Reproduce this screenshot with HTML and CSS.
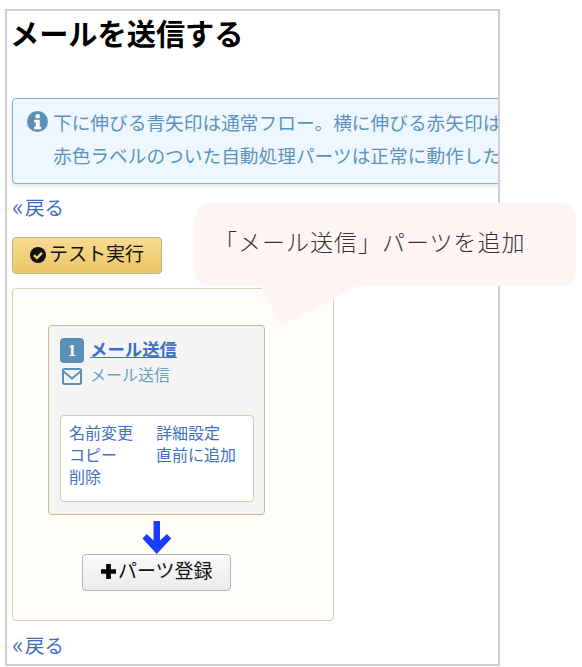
FILE: index.html
```html
<!DOCTYPE html>
<html lang="ja">
<head>
<meta charset="utf-8">
<title>メールを送信する</title>
<link rel="stylesheet" href="styles.css">
</head>
<body>
<div class="page">
  <main class="frame">
    <h1 class="title">メールを送信する</h1>
    <div class="info">
      <svg class="info-icon" viewBox="0 0 22 22" aria-hidden="true"><circle cx="11" cy="11" r="11" fill="#5a8fb8"/><rect x="9" y="3.500" width="4.400" height="4" rx="1" fill="#fff"/><path d="M7.500 9.200h5.800v7.200h1.600v2.600H7.500v-2.600h1.600v-4.600H7.500z" fill="#fff"/></svg>
      <div class="info-text">
        <p>下に伸びる青矢印は通常フロー。横に伸びる赤矢印は条件に一致した場合のフローです。</p>
        <p>赤色ラベルのついた自動処理パーツは正常に動作した場合のみ次へ進みます。</p>
      </div>
    </div>
    <a class="back" href="#"><span class="guil">«</span>戻る</a>
    <button class="btn btn-run" type="button">
      <svg class="run-icon" viewBox="0 0 20 20" aria-hidden="true"><circle cx="10" cy="10" r="10" fill="#111"/><path d="M5 10.200l3.600 3.600L15 7.400" fill="none" stroke="#f0cd78" stroke-width="3"/></svg><span class="btn-label">テスト実行</span>
    </button>
    <section class="canvas">
      <div class="part">
        <div class="part-head">
          <span class="num">1</span>
          <a class="part-name" href="#">メール送信</a>
        </div>
        <div class="part-type">
          <svg class="mail" viewBox="0 0 20 17" aria-hidden="true"><rect x="1" y="1" width="18" height="15" rx="1.500" fill="none" stroke="#5a8fb8" stroke-width="2"/><path d="M1.500 3.500L10 10.500l8.500-7" fill="none" stroke="#5a8fb8" stroke-width="2"/></svg>
          <span>メール送信</span>
        </div>
        <div class="ops">
          <a href="#">名前変更</a><a href="#">詳細設定</a>
          <a href="#">コピー</a><a href="#">直前に追加</a>
          <a href="#">削除</a>
        </div>
      </div>
      <svg class="arrow" viewBox="0 0 30 33" aria-hidden="true"><path d="M11.500 0H18v19.500l7-6.500 4.200 4.500L14.700 33 .5 17.500 4.700 13l6.800 6.500z" fill="#1a3cff"/></svg>
      <button class="btn btn-add" type="button">
        <svg class="plus" viewBox="0 0 16 16" aria-hidden="true"><path d="M5.500 0h5v5.500H16v5h-5.500V16h-5v-5.500H0v-5h5.500z" fill="#000"/></svg><span class="btn-label">パーツ登録</span>
      </button>
    </section>
    <a class="back back-bottom" href="#"><span class="guil">«</span>戻る</a>
  </main>
  <aside class="callout">
    <span>「メール送信」パーツを追加</span>
    <svg class="tail" viewBox="0 0 100 44" aria-hidden="true"><path d="M0 0h100L21 41z" fill="#fff5f4"/></svg>
  </aside>
</div>
</body>
</html>
```
FILE: styles.css
```css
* { box-sizing: border-box; }
html, body { margin: 0; padding: 0; background: #fff; }
body { font-family: "Noto Sans CJK JP", "Noto Sans", sans-serif; overflow: hidden; }
.page { position: relative; width: 582px; height: 667px; padding: 9px 0 0 5px; }
.frame {
  width: 495px; height: 657px; border: 2px solid #cfcfcf;
  overflow: hidden; padding: 0 0 0 5px;
}
.title { margin: 0 0 0 -2px; height: 87px; font-size: 29.200px; line-height: 42px; font-weight: 700; color: #000; white-space: nowrap; }
.info {
  display: flex; width: 560px; height: 86px; border: 1px solid #7fb0d2; border-radius: 4px;
  background: #eef7ff; box-shadow: 0 2px 4px rgba(0,0,0,.12);
  padding: 6px 0 0 14px; color: #5b93bd; font-size: 18.700px; line-height: 33px;
}
.info-icon { width: 21px; height: 21px; flex: none; margin: 6px 5px 0 0; }
.info-text p { margin: 0; white-space: nowrap; }
.back { display: flex; align-items: center; margin-top: 10px; color: #3f6fc4; font-size: 19.500px; line-height: 26px; text-decoration: none; height: 26px; }
.guil { display: inline-block; width: 13px; font-size: 24px; line-height: 20px; margin-top: -3px; }
.btn { display: flex; align-items: center; font-family: inherit; color: #111; border-radius: 4px; padding: 0; white-space: nowrap; }
.btn-label { margin-top: -6px; }
.btn-run {
  margin-top: 17px; width: 150px; height: 37px; padding-left: 17px; font-size: 19px;
  border: 1px solid #bdb08b; background: linear-gradient(#f8dc93, #ecc565);
}
.run-icon { width: 16px; height: 16px; margin: -2px 3px 0 0; }
.canvas {
  display: flex; flex-direction: column; align-items: center;
  margin-top: 14px; width: 322px; height: 333px; padding: 36px 32px 0 0;
  border: 1px solid #d9cfb2; border-radius: 4px; background: #fffefa;
}
.part {
  align-self: flex-start; margin-left: 35px; width: 217px; height: 190px;
  border: 1px solid #c9bd95; border-radius: 4px; background: #f4f4f4; padding: 12px 10px 0 11px;
}
.part-head { display: flex; align-items: center; gap: 7px; height: 25px; }
.num {
  width: 24px; height: 25px; border-radius: 4px; background: #5a8fb8; color: #fff;
  font: 700 17px/25px "Liberation Serif", serif; text-align: center;
}
.part-name { color: #3f6fc4; font-size: 17.400px; font-weight: 700; line-height: 22px; margin: -3px 0 0 -1px; }
.part-type { display: flex; align-items: center; gap: 8px; height: 26px; color: #6f9fc4; font-size: 16px; }
.part-type span { margin-top: -4px; }
.mail { width: 20px; height: 17px; margin: 1px 0 0 2px; }
.ops {
  display: grid; grid-template-columns: 87px 1fr; grid-auto-rows: 22px;
  margin-top: 26px; width: 194px; height: 87px; padding: 5px 0 0 8px;
  background: #fff; border: 1px solid #d3c9ae; border-radius: 4px; font-size: 16px; line-height: 22px;
}
.ops a { color: #3f6fc4; text-decoration: none; white-space: nowrap; }
.arrow { width: 30px; height: 33px; margin: 6px 0 0 -1px; display: block; }
.btn-add {
  width: 149px; height: 37px; margin: 0 0 0 -1px; padding-left: 18px; font-size: 19px;
  border: 1px solid #b5b5b5; background: linear-gradient(#fafafa, #ebebeb);
}
.plus { width: 15px; height: 15px; margin: -3px 2px 0 0; }
.back-bottom { margin-top: 11px; }
.callout {
  position: absolute; left: 195px; top: 203px; width: 381px; height: 83px;
  border-radius: 15px; background: #fff5f4; padding: 21px 0 0 19px;
  font-size: 23px; line-height: 34px; font-weight: 300; color: #333; letter-spacing: 1px; white-space: nowrap;
}
.tail { position: absolute; left: 65px; top: 82px; width: 100px; height: 44px; }
```
